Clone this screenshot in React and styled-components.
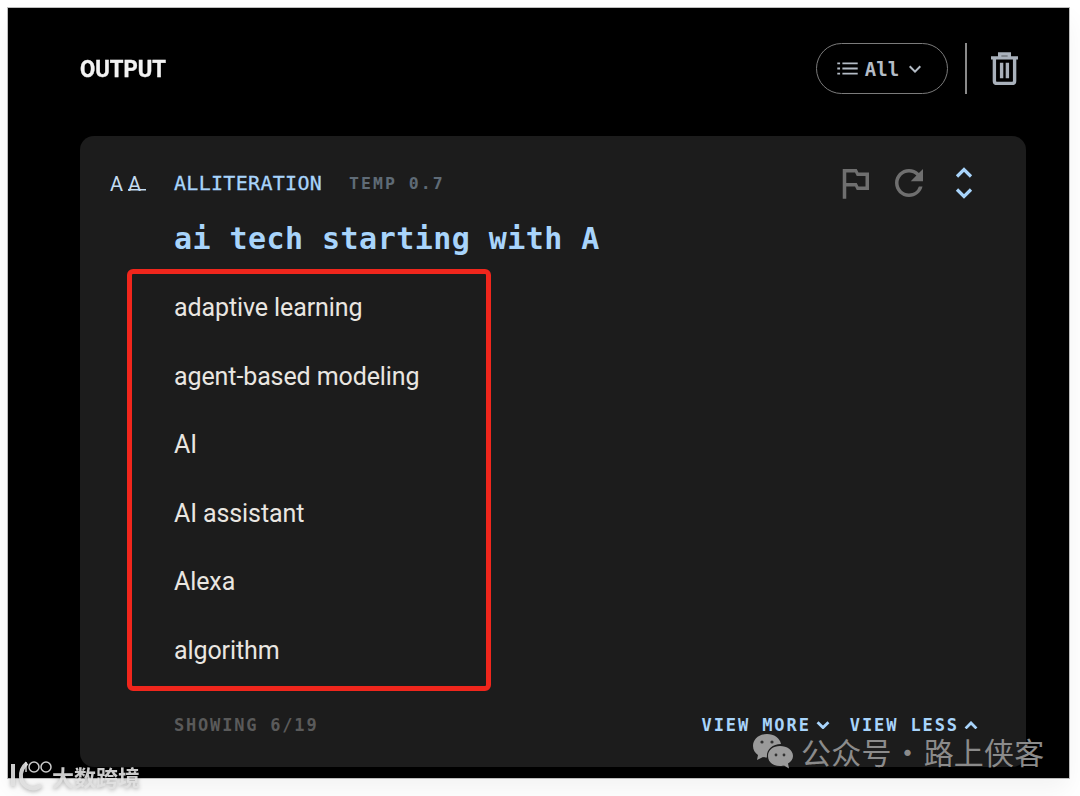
import styled, { createGlobalStyle } from "styled-components";
import { MdOutlinedFlag, MdRefresh, MdKeyboardArrowDown } from "react-icons/md";

const items = [
  "adaptive learning",
  "agent-based modeling",
  "AI",
  "AI assistant",
  "Alexa",
  "algorithm",
];

function Chevron({ up, width }) {
  return (
    <ChevronGlyph viewBox="0 0 18 11" $width={width}>
      <path d={up ? "M2 9.500l7-7 7 7" : "M2 1.500l7 7 7-7"} />
    </ChevronGlyph>
  );
}

export default function App() {
  return (
    <>
      <GlobalStyle />
      <Screen>
        <Header>
          <HeaderTitle>OUTPUT</HeaderTitle>
          <HeaderActions>
            <FilterPill>
              <ListGlyph viewBox="0 0 22 14">
                <path d="M0 1.5h3M5.5 1.5H22M0 7h3M5.5 7H22M0 12.5h3M5.5 12.5H22" />
              </ListGlyph>
              All
              <MdKeyboardArrowDown size={24} />
            </FilterPill>
            <Divider />
            <TrashGlyph viewBox="0 0 28 34">
              <path d="M0 6h28M9 5V2h10v3M3.500 6v24a2.500 2.500 0 0 0 2.500 2.500h16a2.500 2.500 0 0 0 2.500-2.500V6M11 11v16M17 11v16" />
            </TrashGlyph>
          </HeaderActions>
        </Header>

        <Card>
          <CardTop>
            <AaMark>
              <MarkLetter>A</MarkLetter>
              <MarkLetter $tail>A</MarkLetter>
            </AaMark>
            <PromptType>ALLITERATION</PromptType>
            <Temp>TEMP 0.7</Temp>
            <CardTools>
              <ToolIcon><MdOutlinedFlag size={42} /></ToolIcon>
              <ToolIcon><MdRefresh size={42} /></ToolIcon>
              <ExpandStack>
                <Chevron up width={18} />
                <Chevron width={18} />
              </ExpandStack>
            </CardTools>
          </CardTop>

          <Prompt>ai tech starting with A</Prompt>

          <Highlight>
            {items.map((item) => (
              <Item key={item}>{item}</Item>
            ))}
          </Highlight>

          <CardFooter>
            <Showing>SHOWING 6/19</Showing>
            <FooterLinks>
              <FooterLink>VIEW MORE<Chevron width={14} /></FooterLink>
              <FooterLink>VIEW LESS<Chevron up width={14} /></FooterLink>
            </FooterLinks>
          </CardFooter>
        </Card>

        <LeftMark>
          <svg width="46" height="34" viewBox="0 0 46 34" fill="none" stroke="currentColor">
            <path d="M4 5v22" strokeWidth="4" />
            <path d="M18 4C9 12 10 26 21 29c4 1 8 0 11-3" strokeWidth="4" />
            <path d="M17 3v10" strokeWidth="1.5" />
            <circle cx="25" cy="8" r="5" strokeWidth="1.5" />
            <circle cx="37" cy="8" r="5" strokeWidth="1.5" />
          </svg>
          <LeftMarkText>大数跨境</LeftMarkText>
        </LeftMark>

        <RightMark>
          <svg width="42" height="36" viewBox="0 0 42 36">
            <path fill="#9a9a9a" d="M15 1C7 1 1 6 1 13c0 4 2 7 5 9l-1 5 6-3c1 .3 2 .4 4 .5C14 17 20 11 29 11 28 5 22 1 15 1z" />
            <path fill="#9a9a9a" d="M28 13c-7 0-12 4-12 10s5 10 12 10c2 0 3-.2 4-.5l5 3-1-5c3-2 5-4 5-7.500 0-6-6-10-13-10z" />
            <circle cx="10" cy="9" r="1.600" fill="#333" />
            <circle cx="20" cy="9" r="1.600" fill="#333" />
            <circle cx="24" cy="22" r="1.400" fill="#333" />
            <circle cx="32" cy="22" r="1.400" fill="#333" />
          </svg>
          <span>公众号 · 路上侠客</span>
        </RightMark>
      </Screen>
    </>
  );
}

const GlobalStyle = createGlobalStyle`
  html, body {
    margin: 0;
    background: #fff;
  }
  body {
    padding: 8px 11px 0 8px;
    height: 796px;
    box-sizing: border-box;
    overflow: hidden;
  }
`;

const mono = `"DejaVu Sans Mono", "Liberation Mono", monospace`;

const ChevronGlyph = styled.svg`
  display: block;
  flex: none;
  width: ${(props) => props.$width}px;
  height: ${(props) => (props.$width * 11) / 18}px;
  fill: none;
  stroke: currentColor;
  stroke-width: ${(props) => (props.$width > 14 ? 3.2 : 3.6)};
`;

const Screen = styled.div`
  position: relative;
  height: 770px;
  background: #000;
  padding: 35px 43px 0 72px;
  box-sizing: border-box;
  box-shadow: 0 0 0 1px #bdbdbd, 0 12px 24px rgba(0, 0, 0, 0.05);
`;

const Header = styled.header`
  display: flex;
  align-items: center;
  justify-content: space-between;
  height: 51px;
  margin-bottom: 42px;
`;

const HeaderTitle = styled.h1`
  margin: 2px 0 0;
  font: 700 23px "Roboto", sans-serif;
  color: #f3f3f3;
  -webkit-text-stroke: 0.4px #f3f3f3;
  transform: scaleX(0.96);
  transform-origin: left;
`;

const HeaderActions = styled.div`
  display: flex;
  align-items: center;
  margin-right: 8px;
`;

const FilterPill = styled.button`
  display: flex;
  align-items: center;
  justify-content: center;
  gap: 7px;
  width: 132px;
  height: 51px;
  padding: 0;
  box-sizing: border-box;
  border: 1.500px solid #7b7b7b;
  border-radius: 26px;
  background: transparent;
  color: #b4bcc6;
  font: 700 19px ${mono};
  svg:last-child { margin-left: -3px; }
`;

const ListGlyph = styled.svg`
  width: 21px;
  height: 13px;
  fill: none;
  stroke: #b4bcc6;
  stroke-width: 2;
`;

const Divider = styled.div`
  width: 2px;
  height: 51px;
  margin: 0 24px 0 17px;
  background: #8a8a8a;
`;

const TrashGlyph = styled.svg`
  width: 27px;
  height: 33px;
  fill: none;
  stroke: #a9b1bb;
  stroke-width: 3.500;
`;

const Card = styled.section`
  width: 946px;
  height: 631px;
  padding: 27px 47px 0 30px;
  box-sizing: border-box;
  background: #1c1c1c;
  border-radius: 14px;
`;

const CardTop = styled.div`
  display: flex;
  align-items: center;
  height: 40px;
`;

const AaMark = styled.div`
  display: flex;
  width: 64px;
  color: #c3dcf2;
  font: 400 20px/16px "Roboto", sans-serif;
`;

const MarkLetter = styled.span`
  width: 18px;
  height: 15px;
  background: ${(props) =>
    props.$tail
      ? "linear-gradient(#c3dcf2, #c3dcf2) left bottom / 100% 1.500px no-repeat"
      : "none"};
`;

const PromptType = styled.span`
  color: #a8d4fb;
  font: 400 20px ${mono};
  letter-spacing: 0.3px;
  -webkit-text-stroke: 0.3px #a8d4fb;
`;

const Temp = styled.span`
  margin-left: 27px;
  color: #5f6b76;
  font: 700 16.500px ${mono};
  letter-spacing: 2px;
`;

const CardTools = styled.div`
  display: flex;
  align-items: center;
  gap: 12px;
  margin-left: auto;
  margin-right: 6px;
`;

const ToolIcon = styled.span`
  display: flex;
  color: #6f6f6f;
`;

const ExpandStack = styled.span`
  display: flex;
  flex-direction: column;
  gap: 10px;
  margin-left: 13px;
  color: #a8d4fb;
`;

const Prompt = styled.h2`
  margin: 18px 0 0 64px;
  color: #a8d4fb;
  font: 700 30px/36px ${mono};
  letter-spacing: 0.45px;
`;

const Highlight = styled.ul`
  list-style: none;
  width: 364px;
  height: 422px;
  margin: 12px 0 0 17px;
  padding: 0 0 0 42px;
  box-sizing: border-box;
  border: 5px solid #f0261c;
  border-radius: 6px;
`;

const Item = styled.li`
  height: 68.600px;
  color: #e9e6e1;
  font: 400 25px/68.600px "Roboto", sans-serif;
  letter-spacing: -0.1px;
`;

const CardFooter = styled.div`
  display: flex;
  align-items: center;
  justify-content: space-between;
  margin: 24px 0 0 64px;
`;

const Showing = styled.span`
  color: #5a5a5a;
  font: 700 17px/20px ${mono};
  letter-spacing: 1.800px;
`;

const FooterLinks = styled.div`
  display: flex;
  gap: 20px;
  margin-right: 1px;
`;

const FooterLink = styled.span`
  display: flex;
  align-items: center;
  gap: 5px;
  color: #a8d4fb;
  font: 700 17px/20px ${mono};
  letter-spacing: 1.900px;
  white-space: pre;
`;

const LeftMark = styled.div`
  position: absolute;
  left: 1px;
  bottom: -15px;
  display: flex;
  align-items: center;
  color: rgba(225, 225, 225, 0.9);
  filter: drop-shadow(0 1px 2px rgba(0, 0, 0, 0.35));
`;

const LeftMarkText = styled.span`
  margin-left: -3px;
  font: 700 22px "Noto Sans CJK SC", sans-serif;
`;

const RightMark = styled.div`
  position: absolute;
  left: 744px;
  bottom: 9px;
  display: flex;
  align-items: center;
  gap: 7px;
  color: #8b8b8b;
  font: 400 30px/32px "Noto Sans CJK SC", sans-serif;
  letter-spacing: 0.2px;
  word-spacing: -6px;
  white-space: nowrap;
`;
